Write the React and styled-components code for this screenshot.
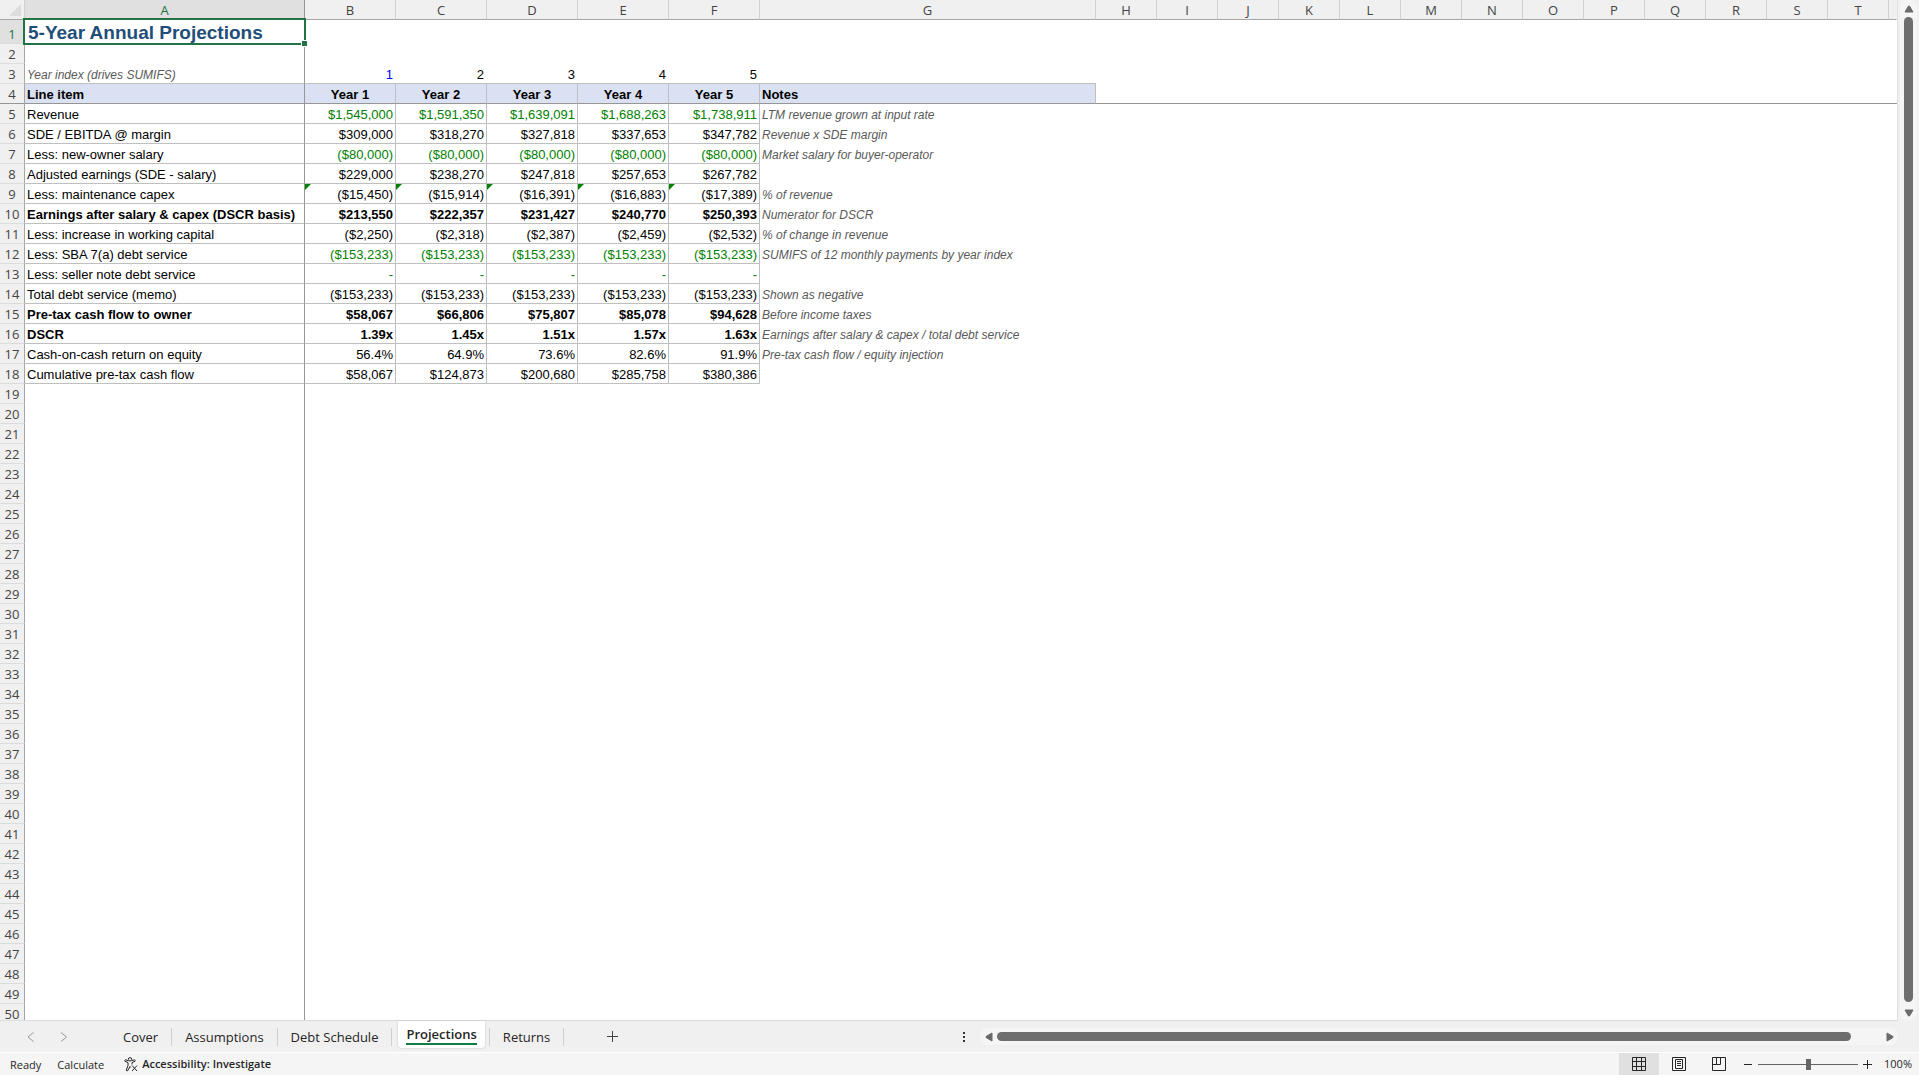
import styled, { createGlobalStyle, css } from 'styled-components'
import { useState } from 'react'

const letters = 'ABCDEFGHIJKLMNOPQRST'.split('')
const colWidths = { A: 280, B: 91, C: 91, D: 91, E: 91, F: 91, G: 336 }
const years = ['Year 1', 'Year 2', 'Year 3', 'Year 4', 'Year 5']

const lines = [
  { label: 'Revenue', values: ['$1,545,000', '$1,591,350', '$1,639,091', '$1,688,263', '$1,738,911'], note: 'LTM revenue grown at input rate', linked: true },
  { label: 'SDE / EBITDA @ margin', values: ['$309,000', '$318,270', '$327,818', '$337,653', '$347,782'], note: 'Revenue x SDE margin' },
  { label: 'Less: new-owner salary', values: ['($80,000)', '($80,000)', '($80,000)', '($80,000)', '($80,000)'], note: 'Market salary for buyer-operator', linked: true },
  { label: 'Adjusted earnings (SDE - salary)', values: ['$229,000', '$238,270', '$247,818', '$257,653', '$267,782'] },
  { label: 'Less: maintenance capex', values: ['($15,450)', '($15,914)', '($16,391)', '($16,883)', '($17,389)'], note: '% of revenue', flagged: true },
  { label: 'Earnings after salary & capex (DSCR basis)', values: ['$213,550', '$222,357', '$231,427', '$240,770', '$250,393'], note: 'Numerator for DSCR', bold: true },
  { label: 'Less: increase in working capital', values: ['($2,250)', '($2,318)', '($2,387)', '($2,459)', '($2,532)'], note: '% of change in revenue' },
  { label: 'Less: SBA 7(a) debt service', values: ['($153,233)', '($153,233)', '($153,233)', '($153,233)', '($153,233)'], note: 'SUMIFS of 12 monthly payments by year index', linked: true },
  { label: 'Less: seller note debt service', values: ['-', '-', '-', '-', '-'], linked: true },
  { label: 'Total debt service (memo)', values: ['($153,233)', '($153,233)', '($153,233)', '($153,233)', '($153,233)'], note: 'Shown as negative' },
  { label: 'Pre-tax cash flow to owner', values: ['$58,067', '$66,806', '$75,807', '$85,078', '$94,628'], note: 'Before income taxes', bold: true },
  { label: 'DSCR', values: ['1.39x', '1.45x', '1.51x', '1.57x', '1.63x'], note: 'Earnings after salary & capex / total debt service', bold: true },
  { label: 'Cash-on-cash return on equity', values: ['56.4%', '64.9%', '73.6%', '82.6%', '91.9%'], note: 'Pre-tax cash flow / equity injection' },
  { label: 'Cumulative pre-tax cash flow', values: ['$58,067', '$124,873', '$200,680', '$285,758', '$380,386'] },
]

const emptyRows = Array.from({ length: 32 }, (_, i) => i + 19)
const sheets = ['Cover', 'Assumptions', 'Debt Schedule', 'Projections', 'Returns']

function Grid() {
  return (
    <Table>
      <colgroup>
        <Col $w={25} />
        {letters.map((l) => (
          <Col key={l} $w={colWidths[l] || 61} />
        ))}
        <col />
      </colgroup>
      <thead>
        <tr>
          <Corner>
            <svg width="12" height="12" viewBox="0 0 12 12" aria-hidden="true">
              <path d="M12 0V12H0Z" fill="#dcdcdc" />
            </svg>
          </Corner>
          {letters.map((l) => (
            <ColHead key={l} scope="col" $active={l === 'A'}>{l}</ColHead>
          ))}
          <ColHead as="td" $last />
        </tr>
      </thead>
      <tbody>
        <Row $tall>
          <RowHead scope="row" $active>1</RowHead>
          <TitleCell>
            5-Year Annual Projections
            <Selection />
          </TitleCell>
          <Cell colSpan={20} />
        </Row>
        <Row>
          <RowHead scope="row">2</RowHead>
          <Cell $freeze />
          <Cell colSpan={20} />
        </Row>
        <Row>
          <RowHead scope="row">3</RowHead>
          <Cell $freeze $bottom $note>Year index (drives SUMIFS)</Cell>
          {years.map((y, i) => (
            <IndexCell key={y} $bottom $num $color={i === 0 ? '#0000ff' : undefined}>{i + 1}</IndexCell>
          ))}
          <Cell $bottom />
          <Cell colSpan={14} />
        </Row>
        <Row>
          <RowHead scope="row" $split>4</RowHead>
          <Cell $freeze $split $fill $bold>Line item</Cell>
          {years.map((y) => (
            <Cell key={y} $right $split $fill $bold $center>{y}</Cell>
          ))}
          <Cell $right $split $fill $bold>Notes</Cell>
          <Cell $split colSpan={14} />
        </Row>
        {lines.map((line, i) => (
          <Row key={line.label}>
            <RowHead scope="row">{i + 5}</RowHead>
            <Cell $freeze $bottom $bold={line.bold}>{line.label}</Cell>
            {line.values.map((v, n) => (
              <Cell
                key={years[n]}
                $right
                $bottom
                $num
                $bold={line.bold}
                $flag={line.flagged}
                $color={line.linked ? '#008000' : undefined}
              >
                {v}
              </Cell>
            ))}
            <Cell $note colSpan={15}>{line.note}</Cell>
          </Row>
        ))}
        {emptyRows.map((n) => (
          <Row key={n}>
            <RowHead scope="row">{n}</RowHead>
            <Cell $freeze />
            <Cell colSpan={20} />
          </Row>
        ))}
      </tbody>
    </Table>
  )
}

function Arrow({ d }) {
  return (
    <svg width="10" height="10" viewBox="0 0 10 10" aria-hidden="true">
      <path d={d} fill="#6a6a6a" stroke="#6a6a6a" strokeLinejoin="round" />
    </svg>
  )
}

function App() {
  const [active, setActive] = useState('Projections')
  const [zoom, setZoom] = useState(100)

  return (
    <Window>
      <GlobalStyle />
      <Main>
        <Sheet>
          <Grid />
        </Sheet>
        <VScroll>
          <ScrollButton aria-label="Scroll up"><Arrow d="M4.500 2H5.500L9 8H1Z" /></ScrollButton>
          <VThumb />
          <ScrollButton aria-label="Scroll down"><Arrow d="M4.500 8H5.500L9 2H1Z" /></ScrollButton>
        </VScroll>
      </Main>

      <TabBar>
        <NavButton aria-label="Previous sheet">
          <svg width="8" height="12" viewBox="0 0 8 12" aria-hidden="true"><path d="M6.500 1.500L1 6L6.500 10.500" /></svg>
        </NavButton>
        <NavButton aria-label="Next sheet">
          <svg width="8" height="12" viewBox="0 0 8 12" aria-hidden="true"><path d="M1 1.500L6.500 6L1 10.500" /></svg>
        </NavButton>
        <Tabs>
          {sheets.map((s, i) => (
            <Tab
              key={s}
              $active={s === active}
              $afterActive={i > 0 && sheets[i - 1] === active}
              onClick={() => setActive(s)}
            >
              <span>{s}</span>
            </Tab>
          ))}
        </Tabs>
        <AddButton aria-label="New sheet">
          <svg width="11" height="11" viewBox="0 0 11 11" aria-hidden="true"><path d="M5.500 0V11M0 5.500H11" /></svg>
        </AddButton>
        <Spacer />
        <Dots aria-label="Resize tab area">
          <svg width="2" height="10" viewBox="0 0 2 10" aria-hidden="true"><path d="M0 0H2V2H0ZM0 4H2V6H0ZM0 8H2V10H0Z" /></svg>
        </Dots>
        <HScroll>
          <ScrollButton aria-label="Scroll left"><Arrow d="M2 4.500V5.500L8 9V1Z" /></ScrollButton>
          <HThumb />
          <ScrollButton aria-label="Scroll right"><Arrow d="M8 4.500V5.500L2 9V1Z" /></ScrollButton>
        </HScroll>
      </TabBar>

      <StatusBar>
        <Status>Ready</Status>
        <Status>Calculate</Status>
        <AccessButton>
          <svg width="14" height="15" viewBox="0 0 14 15" aria-hidden="true">
            <circle cx="6" cy="2.300" r="1.700" />
            <path d="M4.300 3.700L1.500 2.800Q0.300 3.200 1 4.300L4 5.600V8.500L2.300 13Q2.600 14.400 3.700 13.700L6 9.500L6.800 10.500M7.700 3.700L10.500 2.800Q11.700 3.200 11 4.300L8 5.600V7.500M8 8.500L13 14M13 8.500L8 14" />
          </svg>
          Accessibility: Investigate
        </AccessButton>
        <Spacer />
        <ViewButton aria-label="Normal" $active>
          <svg width="14" height="14" viewBox="0 0 14 14" aria-hidden="true">
            <path d="M0.500 0.500H13.500V13.500H0.500ZM4.500 0.500V13.500M9.500 0.500V13.500M0.500 4.500H13.500M0.500 9.500H13.500" />
          </svg>
        </ViewButton>
        <ViewButton aria-label="Page layout">
          <svg width="14" height="14" viewBox="0 0 14 14" aria-hidden="true">
            <path d="M0.500 0.500H13.500V13.500H0.500ZM3.500 2.500H10.500V11.500H3.500ZM5 4.500H9M5 6.500H9M5 8.500H9" />
          </svg>
        </ViewButton>
        <ViewButton aria-label="Page break preview">
          <svg width="14" height="14" viewBox="0 0 14 14" aria-hidden="true">
            <path d="M0.500 0.500H13.500V13.500H0.500ZM4.500 0.500V7.500M8.500 0.500V7.500M0.500 7.500H8.500" />
          </svg>
        </ViewButton>
        <ZoomButton aria-label="Zoom out" onClick={() => setZoom(zoom - 10)}>
          <svg width="9" height="9" viewBox="0 0 9 9" aria-hidden="true"><path d="M0 4.500H8" /></svg>
        </ZoomButton>
        <ZoomSlider
          type="range"
          aria-label="Zoom"
          min="0"
          max="200"
          value={zoom}
          onChange={(e) => setZoom(Number(e.target.value))}
        />
        <ZoomButton aria-label="Zoom in" onClick={() => setZoom(zoom + 10)}>
          <svg width="9" height="9" viewBox="0 0 9 9" aria-hidden="true"><path d="M0 4.500H9M4.500 0V9" /></svg>
        </ZoomButton>
        <ZoomValue>{zoom}%</ZoomValue>
      </StatusBar>
    </Window>
  )
}

export default App

const GlobalStyle = createGlobalStyle`
*{
  box-sizing:border-box;
}
body{
  margin:0;
  background:#f0f0f0;
}
button{
  border:0;
  padding:0;
  background:none;
  font:inherit;
  color:inherit;
  display:flex;
  align-items:center;
  justify-content:center;
}
`

const Window = styled.div`
height:100vh;
display:flex;
flex-direction:column;
font-family:'Open Sans','Noto Sans',sans-serif;
color:#262626;
overflow:hidden;
`

const Main = styled.main`
flex:1;
min-height:0;
display:flex;
`

const Sheet = styled.div`
flex:1;
min-width:0;
overflow:hidden;
background:white;
border-right:1px solid #e0e0e0;
border-bottom:1px solid #dcdcdc;
`

const Table = styled.table`
width:100%;
table-layout:fixed;
border-collapse:separate;
border-spacing:0;
`

const Col = styled.col`
width:${props => props.$w}px;
`

const Corner = styled.td`
height:20px;
padding:0 3px 0 0;
background:#f0f0f0;
border-right:1px solid #d0d0d0;
border-bottom:1px solid #a6a6a6;
text-align:right;
line-height:0;
`

const ColHead = styled.th`
height:20px;
padding:0;
background:${props => props.$active ? '#e0e0e0' : '#f0f0f0'};
color:${props => props.$active ? '#217346' : '#444'};
border-right:1px solid ${props => props.$active ? '#969696' : props.$last ? '#f0f0f0' : '#d0d0d0'};
border-bottom:1px solid #a6a6a6;
font-size:13px;
line-height:16px;
font-weight:400;
`

const Row = styled.tr`
height:${props => props.$tall ? 24 : 20}px;
`

const RowHead = styled.th`
padding:0 0 2px;
background:${props => props.$active ? '#e0e0e0' : '#f0f0f0'};
color:${props => props.$active ? '#217346' : '#444'};
border-right:1px solid #a6a6a6;
border-bottom:1px solid ${props => props.$split ? '#969696' : '#dcdcdc'};
font-size:13px;
line-height:14px;
font-weight:400;
vertical-align:bottom;
`

const Cell = styled.td`
position:relative;
padding:0 2px ${props => props.$bottom || props.$split ? 0 : 1}px;
font-family:'Liberation Sans',Arial,sans-serif;
font-size:13px;
line-height:17px;
vertical-align:bottom;
color:${props => props.$color || 'black'};
white-space:nowrap;
${props => props.$bold && 'font-weight:700;'}
${props => props.$num && 'text-align:right;'}
${props => props.$center && 'text-align:center;'}
${props => props.$right && 'border-right:1px solid #bfbfbf;'}
${props => props.$freeze && 'border-right:1px solid #969696;'}
${props => props.$bottom && 'border-bottom:1px solid #bfbfbf;'}
${props => props.$split && 'border-bottom:1px solid #969696;'}
${props => props.$fill && 'background:#d9e1f2;'}
${props => props.$note && css`
  font-size:12px;
  line-height:16px;
  font-style:italic;
  color:#595959;
`}
${props => props.$flag && css`
  &::before{
    content:'';
    position:absolute;
    top:0;
    left:0;
    border-top:6px solid #008000;
    border-right:6px solid transparent;
  }
`}
`

const IndexCell = styled(Cell)`
padding-right:3px;
`

const TitleCell = styled(Cell)`
padding:0 3px;
font-size:19px;
line-height:23px;
font-weight:700;
color:#1f4e79;
border-right:1px solid #969696;
`

const Selection = styled.div`
position:absolute;
z-index:1;
top:-2px;
left:-2px;
right:-2px;
bottom:-1px;
border:2px solid #217346;
&::after{
  content:'';
  position:absolute;
  right:-3px;
  bottom:-3px;
  width:5px;
  height:5px;
  background:#217346;
  outline:1px solid white;
}
`

const scrollTrack = css`
display:flex;
align-items:center;
background:#f5f5f5;
border-radius:8px;
`

const VScroll = styled.div`
${scrollTrack}
flex-direction:column;
width:17px;
margin:0 2px;
`

const HScroll = styled.div`
${scrollTrack}
flex:0 1 918px;
height:17px;
margin-right:21px;
`

const ScrollButton = styled.button`
flex:none;
width:17px;
height:17px;
`

const VThumb = styled.div`
flex:1;
width:9px;
margin-bottom:2px;
border-radius:5px;
background:#6e6e6e;
`

const HThumb = styled.div`
flex:1;
height:9px;
margin-right:30px;
border-radius:5px;
background:#6e6e6e;
`

const TabBar = styled.nav`
display:flex;
align-items:center;
height:31px;
padding-left:14px;
background:#f0f0f0;
`

const NavButton = styled.button`
width:33px;
height:24px;
svg{
  fill:none;
  stroke:#9a9a9a;
}
`

const Tabs = styled.div`
display:flex;
align-self:stretch;
align-items:center;
margin-left:30px;
`

const Tab = styled.button`
height:18px;
padding:0 13px;
font-size:13px;
line-height:18px;
border-right:1px solid #cfcfcf;
white-space:nowrap;
${props => props.$afterActive && 'border-left:1px solid #cfcfcf;'}
${props => props.$active && css`
  align-self:flex-start;
  height:27px;
  padding:0 8px;
  margin:0 4px 0 6px;
  background:white;
  border:0;
  border-radius:0 0 4px 4px;
  box-shadow:0 0 2px #b8b8b8;
  font-weight:600;
  span{
    border-bottom:2px solid #107c41;
  }
`}
`

const AddButton = styled.button`
width:24px;
height:24px;
margin-left:36px;
svg{
  fill:none;
  stroke:#444;
}
`

const Spacer = styled.div`
flex:1;
`

const Dots = styled.button`
width:12px;
height:20px;
margin-right:10px;
svg{
  fill:#333;
}
`

const StatusBar = styled.footer`
display:flex;
align-items:center;
height:23px;
padding-left:10px;
background:#f5f5f5;
border-top:1px solid white;
font-size:11px;
line-height:16px;
`

const Status = styled.span`
margin-right:16px;
padding-top:2px;
`

const AccessButton = styled.button`
gap:4px;
margin-left:4px;
font-weight:600;
svg{
  fill:none;
  stroke:#262626;
}
`

const ViewButton = styled.button`
width:40px;
height:22px;
background:${props => props.$active ? '#e0e0e0' : 'transparent'};
svg{
  fill:none;
  stroke:#262626;
}
`

const ZoomButton = styled.button`
width:19px;
height:22px;
svg{
  fill:none;
  stroke:#262626;
}
`

const ZoomSlider = styled.input`
appearance:none;
width:100px;
height:21px;
margin:0;
background:linear-gradient(#666,#666) center / 100% 1px no-repeat;
&::-webkit-slider-thumb{
  appearance:none;
  width:5px;
  height:11px;
  background:#666;
}
`

const ZoomValue = styled.span`
width:42px;
padding-left:7px;
`
